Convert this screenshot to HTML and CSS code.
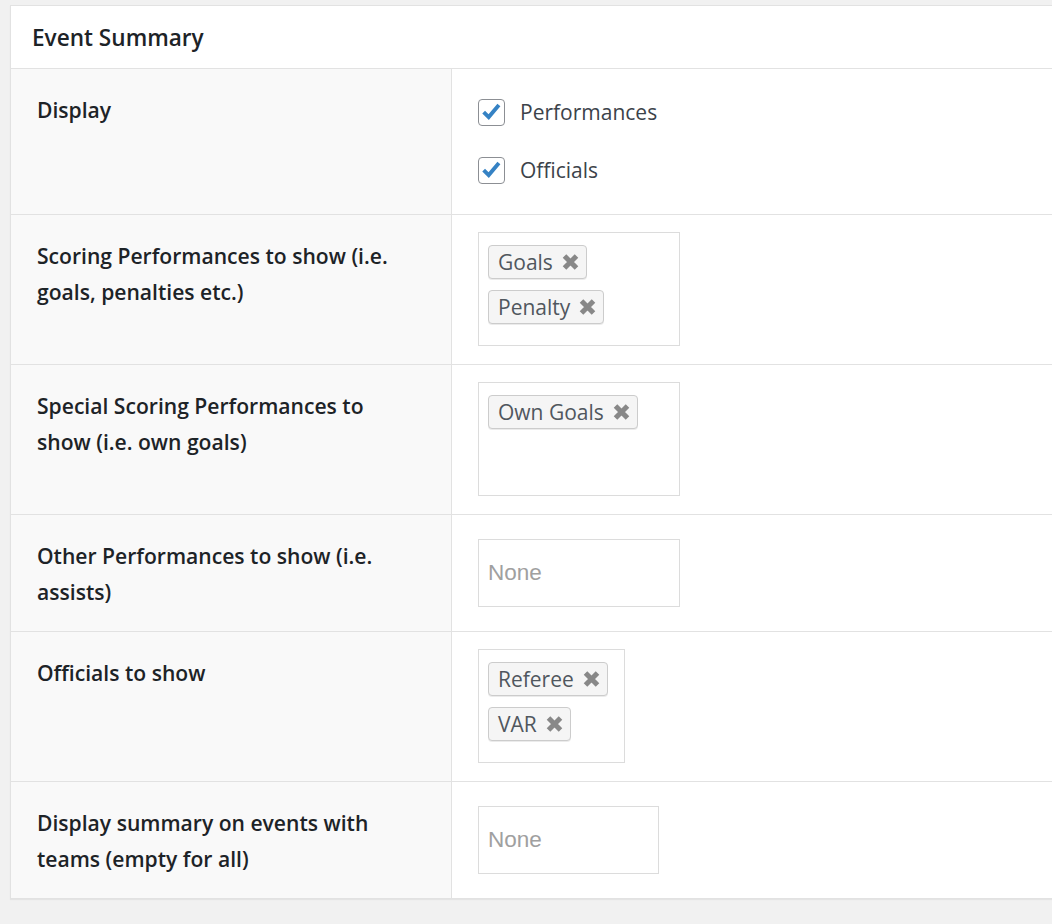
FILE: index.html
```html
<!DOCTYPE html>
<html>
<head>
<meta charset="utf-8">
<title>Event Summary</title>
<link rel="stylesheet" href="styles.css">
</head>
<body>
<div class="page">
  <div class="postbox">
    <h2 class="hndle">Event Summary</h2>
    <div class="row">
      <div class="th">Display</div>
      <div class="td td-checks">
        <label class="check"><span class="cb"><svg viewBox="0 0 27 27" width="25" height="25"><polyline points="5,13 10.5,18.5 21.5,5.5" fill="none" stroke="#3582c4" stroke-width="4.2" stroke-linejoin="miter"/></svg></span>Performances</label>
        <label class="check"><span class="cb"><svg viewBox="0 0 27 27" width="25" height="25"><polyline points="5,13 10.5,18.5 21.5,5.5" fill="none" stroke="#3582c4" stroke-width="4.2" stroke-linejoin="miter"/></svg></span>Officials</label>
      </div>
    </div>
    <div class="row">
      <div class="th">Scoring Performances to show (i.e. goals, penalties etc.)</div>
      <div class="td">
        <div class="select multi w202">
          <span class="tag">Goals<svg class="x" viewBox="0 0 17 16"><path d="M2.5 2 14.5 14M14.5 2 2.5 14"/></svg></span>
          <span class="tag">Penalty<svg class="x" viewBox="0 0 17 16"><path d="M2.5 2 14.5 14M14.5 2 2.5 14"/></svg></span>
        </div>
      </div>
    </div>
    <div class="row">
      <div class="th">Special Scoring Performances to show (i.e. own goals)</div>
      <div class="td">
        <div class="select multi w202">
          <span class="tag">Own Goals<svg class="x" viewBox="0 0 17 16"><path d="M2.5 2 14.5 14M14.5 2 2.5 14"/></svg></span>
        </div>
      </div>
    </div>
    <div class="row">
      <div class="th">Other Performances to show (i.e. assists)</div>
      <div class="td">
        <div class="select single w202">None</div>
      </div>
    </div>
    <div class="row">
      <div class="th">Officials to show</div>
      <div class="td">
        <div class="select multi w147">
          <span class="tag">Referee<svg class="x" viewBox="0 0 17 16"><path d="M2.5 2 14.5 14M14.5 2 2.5 14"/></svg></span>
          <span class="tag">VAR<svg class="x" viewBox="0 0 17 16"><path d="M2.5 2 14.5 14M14.5 2 2.5 14"/></svg></span>
        </div>
      </div>
    </div>
    <div class="row">
      <div class="th">Display summary on events with teams (empty for all)</div>
      <div class="td">
        <div class="select single w181">None</div>
      </div>
    </div>
  </div>
</div>
</body>
</html>
```

FILE: styles.css
```css
html, body {
  margin: 0;
  padding: 0;
  background: #f1f1f1;
  overflow: hidden;
}

.page {
  padding: 5px 0 0 10px;
  height: 924px;
  box-sizing: border-box;
}

.postbox {
  width: 1100px;
  background: #fff;
  border: 1px solid #e2e2e2;
  box-shadow: 0 1px 1px rgba(0, 0, 0, 0.05);
}

.hndle {
  margin: 0;
  height: 62px;
  display: flex;
  align-items: center;
  padding-left: 21px;
  font: 600 22.6px "Open Sans", sans-serif;
  color: #1d2327;
  border-bottom: 1px solid #e2e2e2;
}

.row {
  display: flex;
  border-bottom: 1px solid #e2e2e2;
}

.row:last-child {
  border-bottom: 0;
}

.th {
  width: 441px;
  flex: none;
  box-sizing: border-box;
  background: #f9f9f9;
  border-right: 1px solid #e2e2e2;
  padding: 23px 42px 21px 26px;
  font: 600 21.1px/36px "Open Sans", sans-serif;
  color: #1d2327;
}

.td {
  flex: 1;
  display: flex;
  align-items: center;
  padding: 17px 26px 18px;
}

.td-checks {
  flex-direction: column;
  align-items: flex-start;
  justify-content: center;
  gap: 18px;
  padding: 23px 26px 24px;
}

.check {
  display: flex;
  align-items: center;
  height: 40px;
  gap: 15px;
  font: 400 21px "Open Sans", sans-serif;
  color: #3c434a;
}

.cb {
  width: 27px;
  height: 27px;
  box-sizing: border-box;
  border: 1px solid #8c8f94;
  border-radius: 4px;
  background: #fff;
  display: flex;
  align-items: center;
  justify-content: center;
}

.select {
  box-sizing: border-box;
  border: 1px solid #dcdcdc;
  background: #fff;
}

.multi {
  height: 114px;
  padding: 12px 9px;
  display: flex;
  flex-wrap: wrap;
  align-content: flex-start;
  gap: 11px 8px;
}

.w202 { width: 202px; }
.w147 { width: 147px; }
.w181 { width: 181px; height: 69px; }

.single {
  height: 68px;
  display: flex;
  align-items: center;
  padding-left: 9px;
  font: 22.5px "Liberation Sans", Arial, sans-serif;
  color: #a0a0a0;
}

.tag {
  height: 34px;
  box-sizing: border-box;
  border: 1px solid #ccc;
  border-radius: 4px;
  background: #f5f5f5;
  display: flex;
  align-items: center;
  gap: 9px;
  padding: 0 7px 0 9px;
  font: 400 21px "Open Sans", sans-serif;
  color: #50575e;
  box-shadow: 0 1px 0 rgba(0, 0, 0, 0.08);
}

.x {
  width: 17px;
  height: 16px;
  fill: none;
  stroke: #888;
  stroke-width: 5;
}
```
